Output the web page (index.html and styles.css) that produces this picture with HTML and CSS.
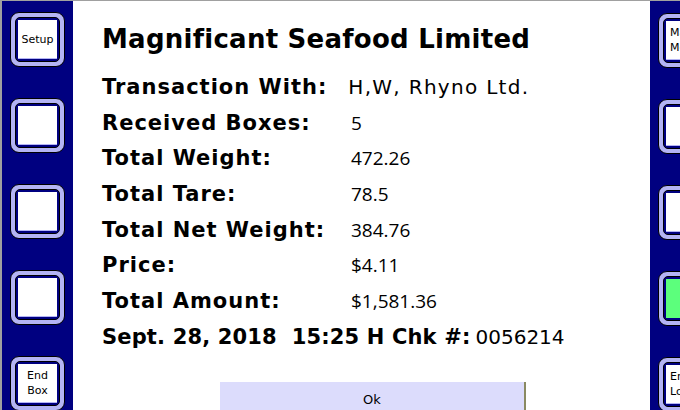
FILE: index.html
```html
<!DOCTYPE html>
<html>
<head>
<meta charset="utf-8">
<link rel="stylesheet" href="styles.css">
</head>
<body>
<div class="screen">
  <div class="side side-left">
    <div class="key"><div class="key-ring"><div class="key-face">Setup</div></div></div>
    <div class="key"><div class="key-ring"><div class="key-face"></div></div></div>
    <div class="key"><div class="key-ring"><div class="key-face"></div></div></div>
    <div class="key"><div class="key-ring"><div class="key-face"></div></div></div>
    <div class="key"><div class="key-ring"><div class="key-face">End<br>Box</div></div></div>
  </div>
  <div class="dialog">
    <h1 class="title">Magnificant Seafood Limited</h1>
    <div class="line"><span class="lbl">Transaction With:</span><span class="party">H,W, Rhyno Ltd.</span></div>
    <div class="row"><span class="lbl col">Received Boxes:</span><span class="val">5</span></div>
    <div class="row"><span class="lbl col">Total Weight:</span><span class="val">472.26</span></div>
    <div class="row"><span class="lbl col">Total Tare:</span><span class="val">78.5</span></div>
    <div class="row"><span class="lbl col">Total Net Weight:</span><span class="val">384.76</span></div>
    <div class="row"><span class="lbl col">Price:</span><span class="val">$4.11</span></div>
    <div class="row"><span class="lbl col">Total Amount:</span><span class="val">$1,581.36</span></div>
    <div class="line"><span class="lbl stamp">Sept. 28, 2018&nbsp; 15:25 H Chk #:</span><span class="chk">0056214</span></div>
    <div class="ok">Ok</div>
  </div>
  <div class="side side-right">
    <div class="key"><div class="key-ring"><div class="key-face left">Main<br>Menu</div></div></div>
    <div class="key"><div class="key-ring"><div class="key-face"></div></div></div>
    <div class="key"><div class="key-ring"><div class="key-face"></div></div></div>
    <div class="key"><div class="key-ring"><div class="key-face green"></div></div></div>
    <div class="key"><div class="key-ring"><div class="key-face left">End<br>Lot</div></div></div>
  </div>
</div>
</body>
</html>
```
FILE: styles.css
```css
html, body {
  margin: 0;
  padding: 0;
  width: 680px;
  height: 410px;
  overflow: hidden;
  background: #a0a0a0;
}
.screen {
  display: grid;
  grid-template-columns: 71px 577px 30px;
  margin: 1px 0 0 2px;
  height: 409px;
  font-family: "DejaVu Sans", Verdana, sans-serif;
  color: #000;
}
.side {
  background: #000080;
  overflow: hidden;
  display: flex;
  flex-direction: column;
  gap: 31px;
  padding: 11px 0 0 8px;
}
.side-right {
  padding-top: 12px;
}
.key {
  flex: none;
  width: 55px;
  height: 55px;
  box-sizing: border-box;
  border: 1px solid #000;
  border-radius: 9px;
  background: #b4b4f4;
  padding: 4px;
}
.key-ring {
  height: 100%;
  box-sizing: border-box;
  border: 1px solid #000;
  border-radius: 5px;
  background: #000080;
  padding: 2px;
}
.key-face {
  height: 100%;
  box-sizing: border-box;
  background: #fff;
  border-bottom: 1px solid #b4b4f4;
  display: flex;
  align-items: center;
  justify-content: center;
  text-align: center;
  font-size: 11px;
  line-height: 15px;
}
.key-face.left {
  justify-content: flex-start;
  padding-left: 4px;
  text-align: left;
}
.key-face.green {
  background: #5cff7c;
  border-bottom-color: #5cff7c;
}
.dialog {
  background: #fff;
  padding: 23px 0 0 29px;
  overflow: hidden;
}
.title {
  margin: 0 0 16px;
  font-size: 26px;
  line-height: 30px;
  letter-spacing: 0.25px;
  font-weight: bold;
}
.line, .row {
  display: flex;
  align-items: baseline;
  height: 35.7px;
  line-height: 35.7px;
  white-space: nowrap;
}
.lbl {
  font-weight: bold;
  font-size: 21px;
  letter-spacing: 1px;
}
.lbl.stamp {
  letter-spacing: 0.15px;
}
.col {
  width: 249px;
  flex: none;
}
.party {
  font-size: 20px;
  letter-spacing: 1.3px;
  margin-left: 21px;
}
.chk {
  font-size: 20px;
  margin-left: 5px;
}
.val {
  font-family: "Open Sans", sans-serif;
  font-size: 19px;
}
.ok {
  margin: 26px 0 0 118px;
  width: 304px;
  height: 36px;
  line-height: 36px;
  background: #dcdcfc;
  border-right: 2px solid #8a8a62;
  text-align: center;
  font-size: 13px;
}
```
